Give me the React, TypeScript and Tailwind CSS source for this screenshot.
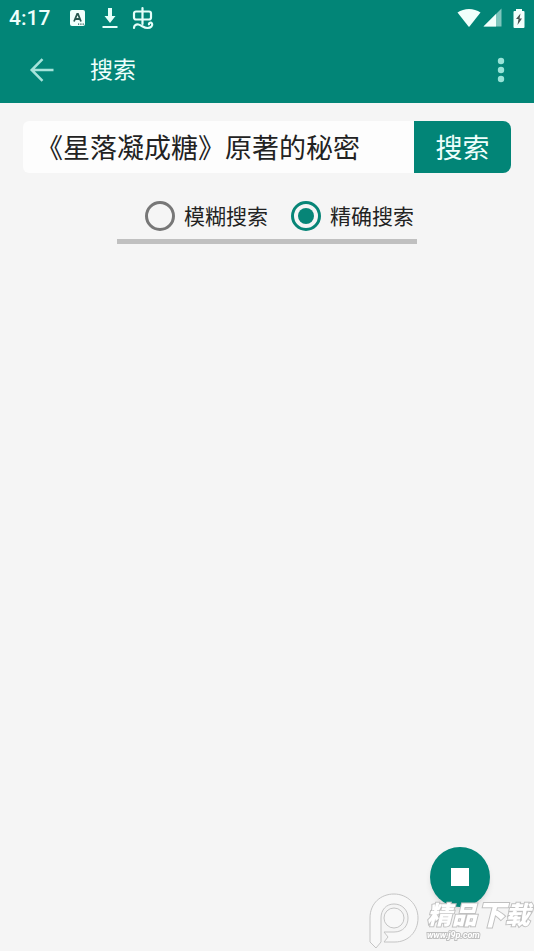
import { useState } from "react";

function StatusBar() {
  return (
    <div className="flex h-9 items-center justify-between pl-[9px] pr-[9px] text-[#effffc]">
      <div className="flex items-center">
        <span className="w-[61px] text-[21px] leading-9 font-medium">4:17</span>
        <svg width="15" height="16" viewBox="0 0 15 16" aria-hidden="true">
          <rect width="15" height="16" rx="2" fill="#f2fffc" />
          <path d="M4 11.5 7.2 4h.8l3 7.5M5 9h5" fill="none" stroke="#28564e" strokeWidth="1.8" />
          <path d="M8 14.2h1.2M10.3 14.2h1.2M12.6 14.2h1.2" stroke="#28564e" strokeWidth="1.2" />
        </svg>
        <svg className="ml-[17px]" width="16" height="22" viewBox="0 0 16 22" fill="#e6fffa" aria-hidden="true">
          <path d="M6 1h4v8h3.500L8 16 2.500 9H6zM.500 19h15v2H.500z" />
        </svg>
        <svg
          className="ml-[14px]"
          width="23"
          height="24"
          viewBox="0 0 23 24"
          fill="none"
          stroke="#e6fffa"
          strokeWidth="2.200"
          strokeLinecap="round"
          strokeLinejoin="round"
          aria-hidden="true"
        >
          <path d="M10.500 2v16M4 5.500h13a2 2 0 0 1 2 2v4a2 2 0 0 1-2 2H4a2 2 0 0 1-2-2v-4a2 2 0 0 1 2-2" />
          <path d="M2 22c0-2.500 2-4 4.500-3.500 3.500.8 5 3.500 9 3.500 3.500 0 5.500-2.500 4.500-4.500-1-1.500-3.500-.8-3 .8" />
        </svg>
      </div>
      <div className="flex items-center">
        <svg width="24" height="20" viewBox="0 0 24 20" fill="#f2fffc" aria-hidden="true">
          <path d="M.5 4.500C7-.2 17-.2 23.500 4.500L12.500 18.500q-.5.500-1 0z" />
        </svg>
        <svg className="ml-[2px]" width="19" height="20" viewBox="0 0 19 20" aria-hidden="true">
          <path d="M18.500.5V18.500H.5z" fill="#7fc6bd" />
          <path d="M13 6v12.500H.5z" fill="#f2fffc" />
        </svg>
        <svg className="ml-[11px]" width="12" height="21" viewBox="0 0 12 21" aria-hidden="true">
          <path d="M3 1h6v2h1.500q1 0 1 1v15q0 1-1 1h-9q-1 0-1-1V4q0-1 1-1H3z" fill="#f2fffc" />
          <path d="M7.500 5.500 3 11h2.500l-1 6L9 10.500H6.500z" fill="#4b514e" />
        </svg>
      </div>
    </div>
  );
}

function Toolbar() {
  return (
    <div className="flex h-[67px] items-center pl-[29px] pr-[21px]">
      <button type="button" aria-label="返回">
        <svg
          width="25"
          height="24"
          viewBox="0 0 25 24"
          fill="none"
          stroke="#a6e3da"
          strokeWidth="2.500"
          aria-hidden="true"
        >
          <path d="M13.500 1.200 2.700 12l10.800 10.800M3 12h21.500" />
        </svg>
      </button>
      <h1 className="ml-9 grow pt-[2px] text-[23px] leading-8 text-[#effffc]">搜索</h1>
      <button type="button" aria-label="更多选项" className="w-6">
        <svg className="mx-auto" width="8" height="26" viewBox="0 0 8 26" fill="#98e3d7" aria-hidden="true">
          <circle cx="4" cy="4" r="3.200" />
          <circle cx="4" cy="13" r="3.200" />
          <circle cx="4" cy="22" r="3.200" />
        </svg>
      </button>
    </div>
  );
}

type ModeProps = { label: string; checked: boolean; onSelect: () => void };

function Mode({ label, checked, onSelect }: ModeProps) {
  return (
    <label className="flex items-center gap-[9px] text-[21px] leading-[30px] whitespace-nowrap text-[#222]">
      <input
        type="radio"
        name="mode"
        checked={checked}
        onChange={onSelect}
        className="grid size-[30px] shrink-0 appearance-none place-items-center rounded-full border-3 border-[#777] before:size-4 before:rounded-full before:content-[''] checked:border-[#078577] checked:before:bg-[#078577]"
      />
      <span className="-mb-[2px]">{label}</span>
    </label>
  );
}

function Watermark() {
  return (
    <div className="pointer-events-none fixed right-1 bottom-0 flex h-[58px] items-start gap-[7px]">
      <svg width="51" height="56" viewBox="0 0 51 56" fill="#f8f8f8" stroke="#c4c4c4" aria-hidden="true">
        <path d="M1 49V25C1 10 12 1 25 1s24 10 24 24-10 24-23 24H15l4-5-4-5h10c9 0 14-6 14-14S33 11 25 11s-13 6-13 14v24l-5 6z" />
        <circle cx="25" cy="25" r="10" />
      </svg>
      <div className="flex flex-col pt-[9px] italic [paint-order:stroke]">
        <span className="flex h-[27px] items-center text-[25px] leading-8 font-black text-white [-webkit-text-stroke:2px_#c0c0c0]">
          精品
          <span className="text-[28px]">下</span>
          载
        </span>
        <span className="text-[9px] leading-3 font-bold text-white [-webkit-text-stroke:2px_#c0c0c0]">
          www.j9p.com
        </span>
      </div>
    </div>
  );
}

export default function App() {
  const [query, setQuery] = useState("《星落凝成糖》原著的秘密");
  const [mode, setMode] = useState("exact");

  return (
    <div className="min-h-screen bg-[#f5f5f5] font-[Roboto,'Noto_Sans_CJK_SC',sans-serif]">
      <header className="bg-[#028577]">
        <StatusBar />
        <Toolbar />
      </header>
      <main className="flex flex-col px-[23px] pt-[18px]">
        <form className="flex h-[52px]" onSubmit={(e) => e.preventDefault()}>
          <input
            type="text"
            aria-label="搜索内容"
            value={query}
            onChange={(e) => setQuery(e.target.value)}
            className="min-w-0 grow rounded-l-md bg-[#fdfdfd] pt-1 pl-[13px] text-[27px] text-[#222] outline-none"
          />
          <button
            type="submit"
            className="w-[97px] shrink-0 rounded-r-lg bg-[#028577] pt-1 text-[27px] text-[#effffc]"
          >
            搜索
          </button>
        </form>
        <fieldset className="mt-7 flex gap-[23px] self-center border-b-[5px] border-[#c0c0c0] pr-[3px] pb-2 pl-7">
          <Mode label="模糊搜索" checked={mode === "fuzzy"} onSelect={() => setMode("fuzzy")} />
          <Mode label="精确搜索" checked={mode === "exact"} onSelect={() => setMode("exact")} />
        </fieldset>
      </main>
      <button
        type="button"
        aria-label="停止"
        className="fixed right-11 bottom-11 grid size-[60px] place-items-center rounded-full bg-[#028577] shadow-md"
      >
        <span className="size-[18px] bg-white" />
      </button>
      <Watermark />
    </div>
  );
}
